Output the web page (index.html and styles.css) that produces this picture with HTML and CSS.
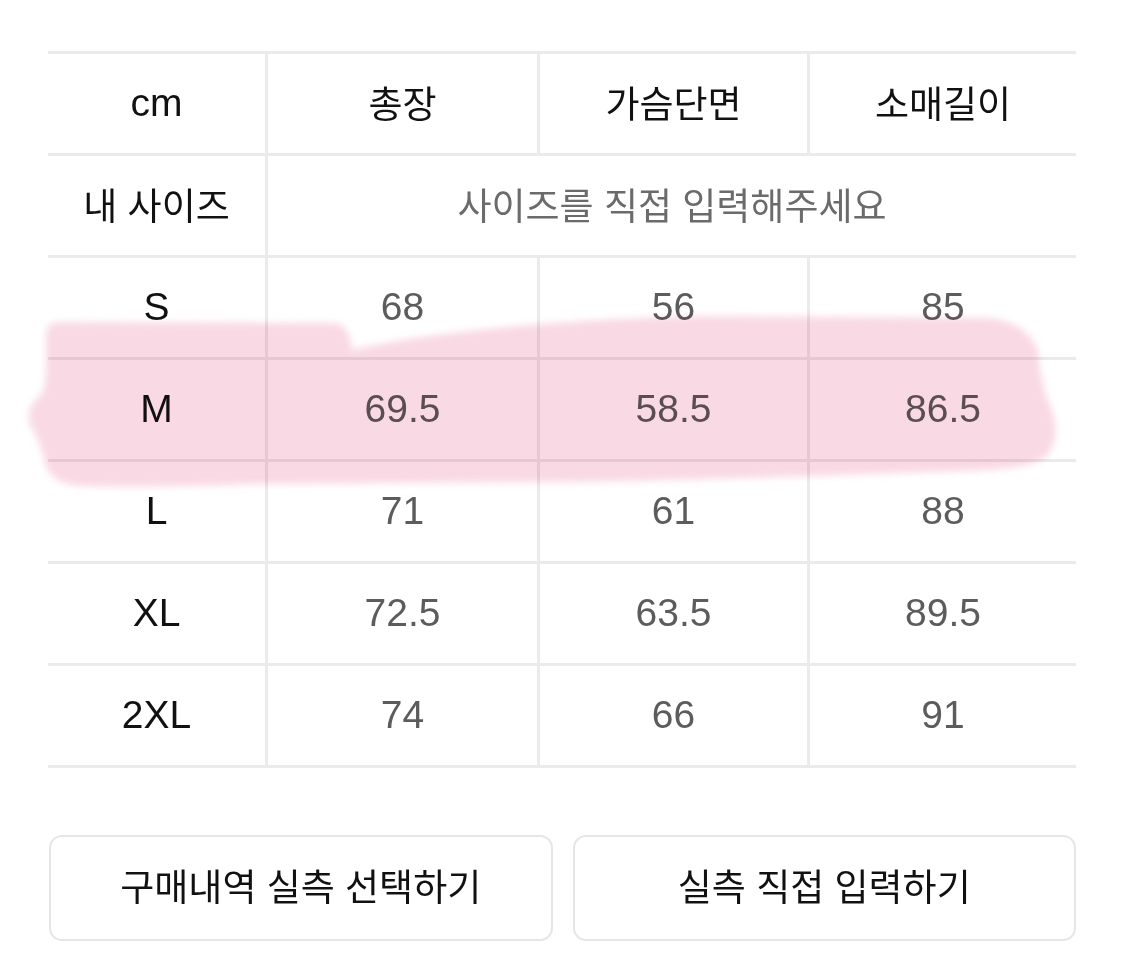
FILE: index.html
```html
<!DOCTYPE html>
<html lang="ko">
<head>
<meta charset="utf-8">
<link rel="stylesheet" href="styles.css">
</head>
<body>
<main class="page">
  <section class="size-table">
    <div class="cell head first">cm</div>
    <div class="cell head ko">총장</div>
    <div class="cell head ko">가슴단면</div>
    <div class="cell head ko">소매길이</div>

    <div class="cell head ko first">내 사이즈</div>
    <div class="cell placeholder ko span3">사이즈를 직접 입력해주세요</div>

    <div class="cell label first">S</div>
    <div class="cell val">68</div>
    <div class="cell val">56</div>
    <div class="cell val">85</div>

    <div class="cell label first">M</div>
    <div class="cell val">69.5</div>
    <div class="cell val">58.5</div>
    <div class="cell val">86.5</div>

    <div class="cell label first">L</div>
    <div class="cell val">71</div>
    <div class="cell val">61</div>
    <div class="cell val">88</div>

    <div class="cell label first">XL</div>
    <div class="cell val">72.5</div>
    <div class="cell val">63.5</div>
    <div class="cell val">89.5</div>

    <div class="cell label first last">2XL</div>
    <div class="cell val last">74</div>
    <div class="cell val last">66</div>
    <div class="cell val last">91</div>
  </section>

  <div class="actions">
    <button class="btn">구매내역 실측 선택하기</button>
    <button class="btn">실측 직접 입력하기</button>
  </div>
</main>

<svg class="highlight" width="1125" height="979" viewBox="0 0 1125 979" aria-hidden="true">
  <defs>
    <filter id="soft" x="-5%" y="-20%" width="110%" height="140%">
      <feGaussianBlur stdDeviation="3.5"/>
    </filter>
  </defs>
  <path filter="url(#soft)" fill="#f8d3df" d="M46,334 Q46,322 62,322 L336,323 Q350,326 352,350 C 420,334 540,320 700,316 L 985,318 Q1025,320 1038,350 Q1040,385 1052,410 Q1062,440 1045,458 Q1025,468 990,470 C 820,476 700,480 560,482 L 260,484 Q150,488 80,486 Q 52,484 46,466 Q 40,440 30,425 Q 26,405 40,396 Q 46,388 46,370 Z"/>
</svg>
</body>
</html>
```
FILE: styles.css
```css
* { box-sizing: border-box; }

html, body {
  margin: 0;
  padding: 0;
  background: #ffffff;
}

body {
  font-family: "Liberation Sans", "Noto Sans CJK KR", sans-serif;
  color: #111111;
  position: relative;
  width: 1125px;
  height: 979px;
  overflow: hidden;
}

.page {
  padding: 51px 49px 0 48px;
}

.size-table {
  display: grid;
  grid-template-columns: 217px 272px 270px 269px;
}

.cell {
  height: 102px;
  border-top: 3px solid #ebebeb;
  border-left: 3px solid #ebebeb;
  display: flex;
  align-items: center;
  justify-content: center;
  font-size: 39px;
  padding-bottom: 2px;
}

.cell.ko {
  font-size: 37px;
  padding-bottom: 4px;
}

.cell.first { border-left: none; }
.cell.last { height: 105px; border-bottom: 3px solid #ebebeb; }

.head { color: #111111; }
.label { color: #111111; }
.val { color: #5c5c5c; }
.placeholder { color: #6b6b6b; }
.span3 { grid-column: span 3; }

.actions {
  display: flex;
  gap: 20px;
  margin-top: 67px;
  padding-left: 1px;
}

.btn {
  flex: 1;
  height: 106px;
  background: #ffffff;
  border: 2px solid #e6e6e6;
  border-radius: 13px;
  font-family: "Liberation Sans", "Noto Sans CJK KR", sans-serif;
  font-size: 37px;
  color: #111111;
  padding: 0 0 6px;
}

.highlight {
  position: absolute;
  left: 0;
  top: 0;
  pointer-events: none;
  mix-blend-mode: multiply;
  opacity: 0.85;
}
```
